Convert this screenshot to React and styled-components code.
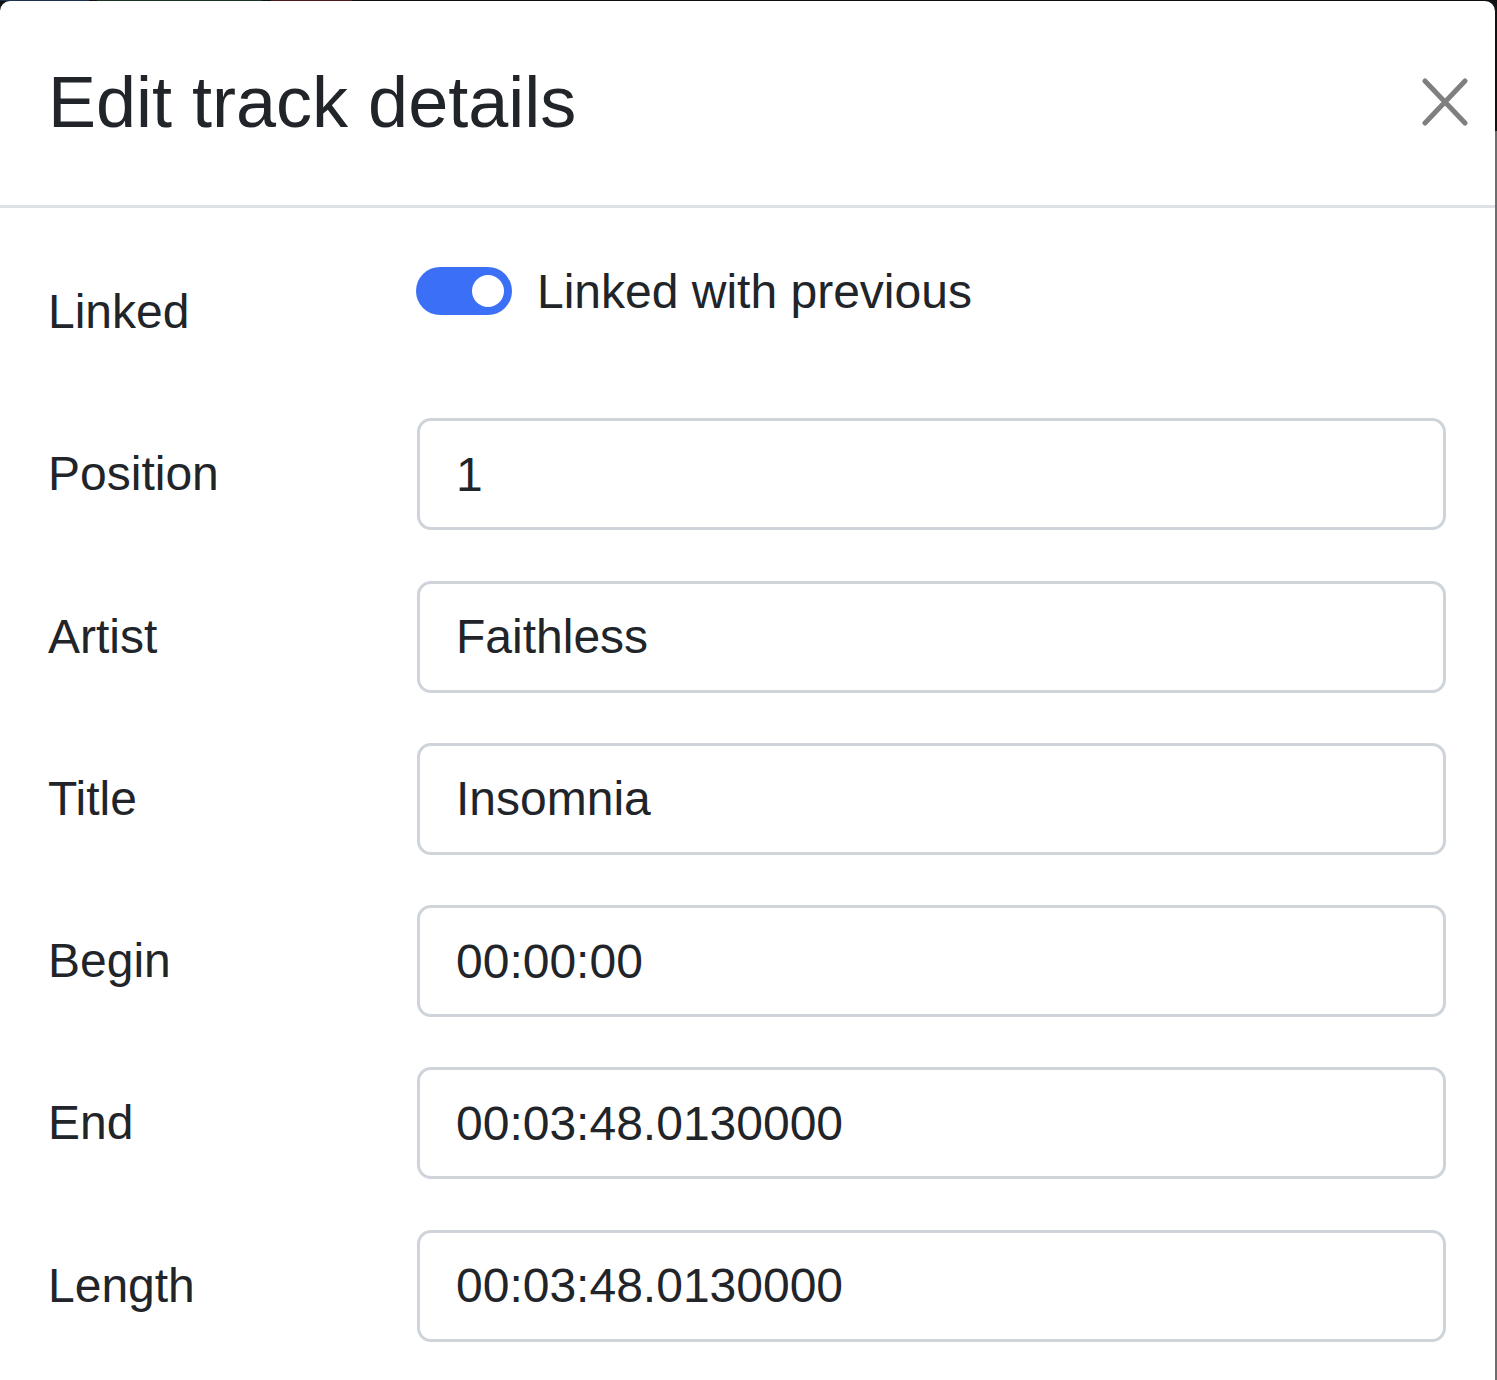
import React from "react";
import styled, { createGlobalStyle } from "styled-components";

const GlobalStyle = createGlobalStyle`
  html, body {
    margin: 0;
    padding: 0;
    background: #111214;
  }
  * {
    box-sizing: border-box;
  }
`;

const Page = styled.div`
  display: flex;
  flex-direction: column;
  width: 1497px;
  height: 1380px;
  overflow: hidden;
  font-family: "Liberation Sans", Arial, sans-serif;
  color: #212529;
`;

const TopStrip = styled.div`
  display: flex;
  height: 1px;
  flex-shrink: 0;
  background: #0e0f10;
`;

const Segment = styled.div`
  width: ${(p) => p.w}px;
  margin-left: ${(p) => p.gap || 0}px;
  background: ${(p) => p.color};
`;

const Stage = styled.div`
  display: flex;
  flex: 1;
  background: #111214;
`;

const SideStrip = styled.div`
  width: 2px;
  background: linear-gradient(#111214 0 130px, #6c6c6c 130px);
`;

const Modal = styled.div`
  width: 1495px;
  display: flex;
  flex-direction: column;
  background: #ffffff;
  border-radius: 10px 10px 0 0;
`;

const Header = styled.div`
  display: flex;
  align-items: center;
  justify-content: space-between;
  height: 207px;
  padding: 0 27px 2px 48px;
  border-bottom: 3px solid #dee2e6;
`;

const Title = styled.h5`
  margin: 0;
  font-size: 72px;
  font-weight: 400;
  line-height: 1.2;
`;

const CloseButton = styled.button`
  display: flex;
  padding: 0;
  border: 0;
  background: transparent;
  cursor: pointer;
`;

const Body = styled.div`
  display: flex;
  flex-direction: column;
  gap: 50.25px;
  padding: 48px 49px 0 48px;
`;

const Row = styled.div`
  display: grid;
  grid-template-columns: 369px 1fr;
  align-items: ${(p) => (p.top ? "start" : "center")};
  min-height: 112px;
`;

const Label = styled.label`
  font-size: 48px;
  line-height: 70px;
  padding-top: ${(p) => p.offset || 0}px;
`;

const SwitchLine = styled.div`
  display: flex;
  align-items: center;
  gap: 25px;
  height: 70px;
  font-size: 48px;
`;

const Switch = styled.span`
  position: relative;
  display: inline-block;
  width: 96px;
  height: 48px;
  border-radius: 24px;
  background: #3b6ff5;
  margin-left: -1px;

  &::after {
    content: "";
    position: absolute;
    top: 8px;
    right: 8px;
    width: 32px;
    height: 32px;
    border-radius: 50%;
    background: #ffffff;
  }
`;

const Input = styled.input`
  width: 100%;
  height: 112px;
  padding: 0 36px;
  border: 3px solid #ced4da;
  border-radius: 14px;
  background: #ffffff;
  color: #212529;
  font-family: "Liberation Sans", Arial, sans-serif;
  font-size: 48px;
  outline: none;
`;

const fields = [
  { label: "Position", value: "1" },
  { label: "Artist", value: "Faithless" },
  { label: "Title", value: "Insomnia" },
  { label: "Begin", value: "00:00:00" },
  { label: "End", value: "00:03:48.0130000" },
  { label: "Length", value: "00:03:48.0130000" },
];

function CloseIcon() {
  return (
    <svg width="46" height="48" viewBox="0 0 46 48">
      <path
        d="M3 3 L43 45 M43 3 L3 45"
        stroke="#7f7f7f"
        strokeWidth="5"
        strokeLinecap="round"
        fill="none"
      />
    </svg>
  );
}

export default function App() {
  return (
    <Page>
      <GlobalStyle />
      <TopStrip>
        <Segment w={89} color="#1d3152" />
        <Segment w={165} gap={8} color="#1c3424" />
        <Segment w={81} gap={9} color="#4b1d20" />
      </TopStrip>
      <Stage>
        <Modal>
          <Header>
            <Title>Edit track details</Title>
            <CloseButton aria-label="Close">
              <CloseIcon />
            </CloseButton>
          </Header>
          <Body>
            <Row top>
              <Label offset={21}>Linked</Label>
              <SwitchLine>
                <Switch />
                <span>Linked with previous</span>
              </SwitchLine>
            </Row>
            {fields.map((f) => (
              <Row key={f.label}>
                <Label>{f.label}</Label>
                <Input defaultValue={f.value} readOnly />
              </Row>
            ))}
          </Body>
        </Modal>
        <SideStrip />
      </Stage>
    </Page>
  );
}
